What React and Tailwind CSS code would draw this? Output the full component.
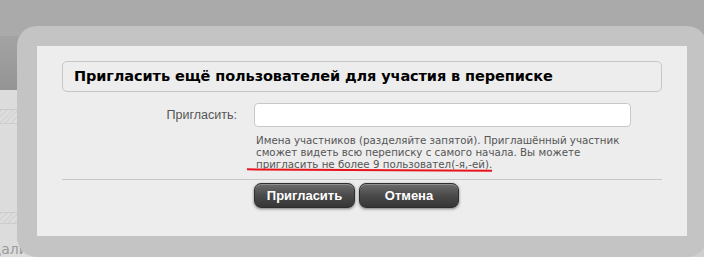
export default function App() {
  return (
    <div className="relative w-[704px] h-[257px] overflow-hidden bg-[#aaaaaa]" style={{ fontFamily: '"DejaVu Sans", sans-serif' }}>
      {/* background page (dimmed) */}
      <div className="flex flex-col w-full h-full">
        <div className="h-[37px] bg-[#aaaaaa] border-b border-[#a2a2a2]" />
        <div className="h-[53px] bg-gradient-to-b from-[#a3a3a3] to-[#949494]" />
        <div className="flex-1 flex flex-col bg-gradient-to-r from-[#dcdcdc] via-[#e6e6e6] to-[#cfcfcf]">
          <div className="h-[20px] border-b border-[#c9c9c9]" />
          <div className="h-[14px] bg-[repeating-linear-gradient(135deg,#d6d6d6_0px,#d6d6d6_2px,#dedede_2px,#dedede_4px)] border-b border-[#cdcdcd]" />
          <div className="h-[88px]" />
          <div className="h-[12px] bg-[repeating-linear-gradient(135deg,#d6d6d6_0px,#d6d6d6_2px,#dedede_2px,#dedede_4px)] border-y border-[#cdcdcd]" />
          <div className="pt-[18px] text-[14px] leading-none text-[#9a9a9a] -ml-[17px]">Удалить</div>
        </div>
      </div>

      {/* modal overlay */}
      <div className="absolute left-[17px] top-[26px] w-[690px] h-[231px] rounded-[20px] bg-[#c4c4c4] pl-[20px] pt-[20px]">
        <div className="w-[650px] h-[190px] bg-[#ededed] flex flex-col">
          <div className="ml-[25px] mt-[15px] w-[600px] h-[31px] rounded-[5px] border border-[#c6c6c6] flex items-center pl-[11px]">
            <span className="text-[14.5px] tracking-[-0.1px] font-bold text-black leading-none">Пригласить ещё пользователей для участия в переписке</span>
          </div>
          <div className="flex mt-[11px]">
            <div className="w-[200px] text-right text-[12.5px] text-[#555555] leading-[24px]" style={{ fontFamily: '"Liberation Sans", sans-serif' }}>Пригласить:</div>
            <div className="flex flex-col ml-[17px]">
              <div className="w-[377px] h-[24px] bg-white border border-[#c8c8c8] rounded-[4px]" />
              <div className="relative mt-[7px] pl-[2px] text-[10.25px] leading-[12px] text-[#555555]">
                <div>Имена участников (разделяйте запятой). Приглашённый участник</div>
                <div>сможет видеть всю переписку с самого начала. Вы можете</div>
                <div>пригласить не более 9 пользовател(-я,-ей).</div>
                <div className="absolute left-[-7px] top-[35px] w-[245px] h-[2px] bg-[#e8141c] rotate-[0.3deg]" />
              </div>
            </div>
          </div>
          <div className="ml-[25px] mt-[9px] w-[600px] h-px bg-[#c8c8c8]" />
          <div className="flex gap-[4px] ml-[217px] mt-[3px]">
            <button className="w-[101px] h-[25px] rounded-[7px] border border-[#2e2e2e] bg-gradient-to-b from-[#6c6c6c] via-[#4a4a4a] to-[#363636] shadow-[0_1px_3px_rgba(0,0,0,0.5),inset_0_1px_0_rgba(255,255,255,0.25)] text-white text-[13px] font-bold leading-none" style={{ fontFamily: '"Liberation Sans Narrow", "Liberation Sans", sans-serif' }}>Пригласить</button>
            <button className="w-[100px] h-[25px] rounded-[7px] border border-[#2e2e2e] bg-gradient-to-b from-[#6c6c6c] via-[#4a4a4a] to-[#363636] shadow-[0_1px_3px_rgba(0,0,0,0.5),inset_0_1px_0_rgba(255,255,255,0.25)] text-white text-[13px] font-bold leading-none" style={{ fontFamily: '"Liberation Sans Narrow", "Liberation Sans", sans-serif' }}>Отмена</button>
          </div>
        </div>
      </div>
    </div>
  );
}
